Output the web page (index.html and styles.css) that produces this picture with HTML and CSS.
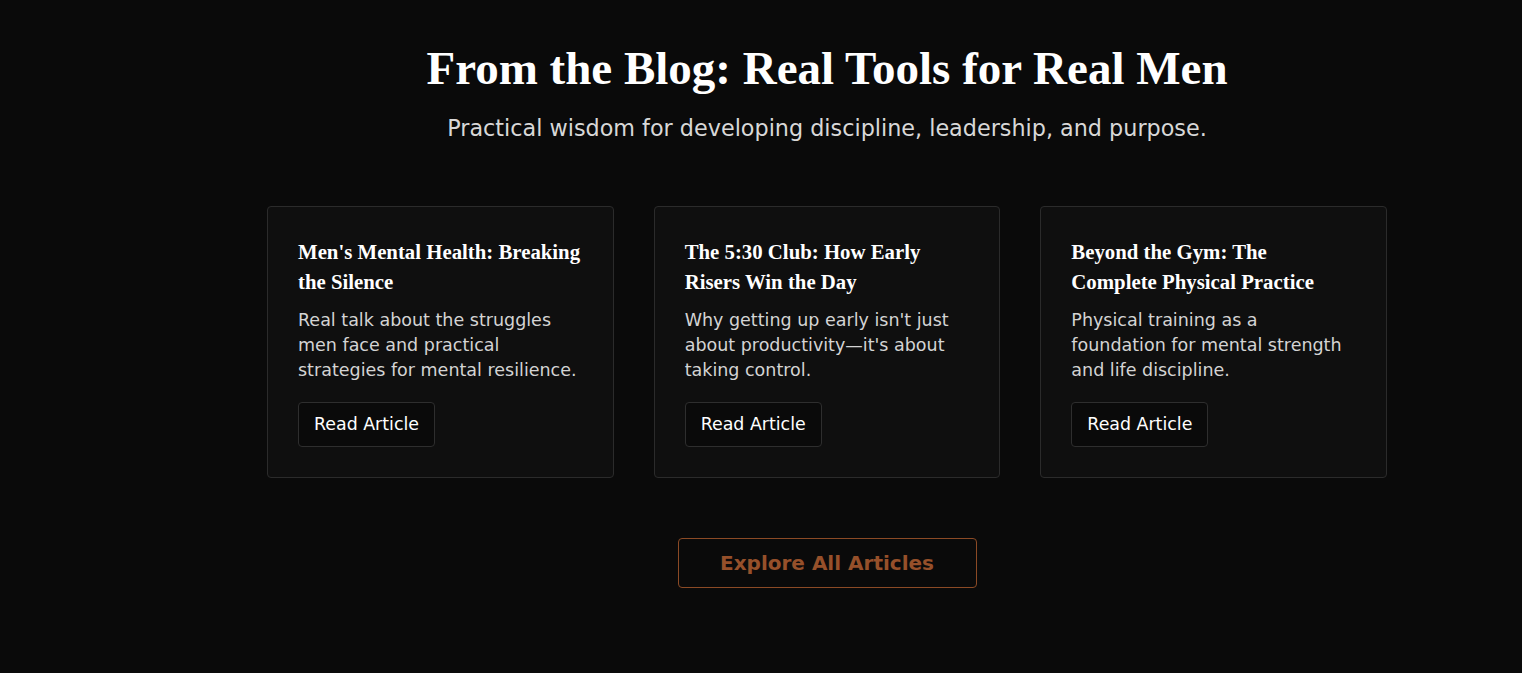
FILE: index.html
```html
<!DOCTYPE html>
<html lang="en">
<head>
<meta charset="utf-8">
<title>From the Blog</title>
<link rel="stylesheet" href="styles.css">
</head>
<body>
<section class="blog">
  <div class="blog-inner">
    <h2 class="blog-title">From the Blog: Real Tools for Real Men</h2>
    <p class="blog-sub">Practical wisdom for developing discipline, leadership, and purpose.</p>
    <div class="cards">
      <article class="card">
        <h3 class="card-title">Men's Mental Health: Breaking the Silence</h3>
        <p class="card-text">Real talk about the struggles men face and practical strategies for mental resilience.</p>
        <a class="card-btn" href="#">Read Article</a>
      </article>
      <article class="card">
        <h3 class="card-title">The 5:30 Club: How Early Risers Win the Day</h3>
        <p class="card-text">Why getting up early isn't just about productivity—it's about taking control.</p>
        <a class="card-btn" href="#">Read Article</a>
      </article>
      <article class="card">
        <h3 class="card-title">Beyond the Gym: The Complete Physical Practice</h3>
        <p class="card-text">Physical training as a foundation for mental strength and life discipline.</p>
        <a class="card-btn" href="#">Read Article</a>
      </article>
    </div>
    <div class="explore-row">
      <a class="explore-btn" href="#">Explore All Articles</a>
    </div>
  </div>
</section>
</body>
</html>
```
FILE: styles.css
```css
* { box-sizing: border-box; }
html, body {
  margin: 0;
  padding: 0;
  background: #0a0a0a;
  height: 100%;
}
body {
  font-family: "DejaVu Sans", "Open Sans", sans-serif;
  color: #fff;
}
.blog {
  padding: 39px 0 0 132px;
}
.blog-inner {
  width: 1120px;
  margin: 0 auto;
  display: flex;
  flex-direction: column;
  align-items: center;
}
.blog-title {
  margin: 0;
  font-family: "Liberation Serif", "DejaVu Serif", serif;
  font-weight: 700;
  font-size: 47px;
  line-height: 58px;
  color: #fff;
  text-align: center;
}
.blog-sub {
  margin: 15px 0 0;
  font-size: 22.3px;
  line-height: 33px;
  color: #d8d8d8;
  text-align: center;
}
.cards {
  margin-top: 61px;
  width: 100%;
  display: grid;
  grid-template-columns: repeat(3, 1fr);
  gap: 40px;
}
.card {
  background: #0f0f0f;
  border: 1px solid #2b2b2b;
  border-radius: 4px;
  padding: 30px;
  display: flex;
  flex-direction: column;
  align-items: flex-start;
}
.card-title {
  margin: 0;
  font-family: "Liberation Serif", "DejaVu Serif", serif;
  font-weight: 700;
  font-size: 20.8px;
  line-height: 30px;
  color: #fff;
}
.card-text {
  margin: 11px 0 19px;
  font-size: 17.5px;
  line-height: 25px;
  color: #d4d4d4;
}
.card-btn {
  display: inline-block;
  padding: 0 15px;
  height: 45px;
  line-height: 43px;
  border: 1px solid #2e2e2e;
  border-radius: 4px;
  background: #0a0a0a;
  color: #fff;
  font-size: 17.4px;
  text-decoration: none;
}
.explore-row {
  margin-top: 60px;
  display: flex;
  justify-content: center;
}
.explore-btn {
  display: inline-flex;
  align-items: center;
  justify-content: center;
  width: 299px;
  height: 50px;
  border: 1px solid #8b4a25;
  border-radius: 4px;
  color: #96502a;
  font-size: 20px;
  font-weight: 700;
  text-decoration: none;
}
```
